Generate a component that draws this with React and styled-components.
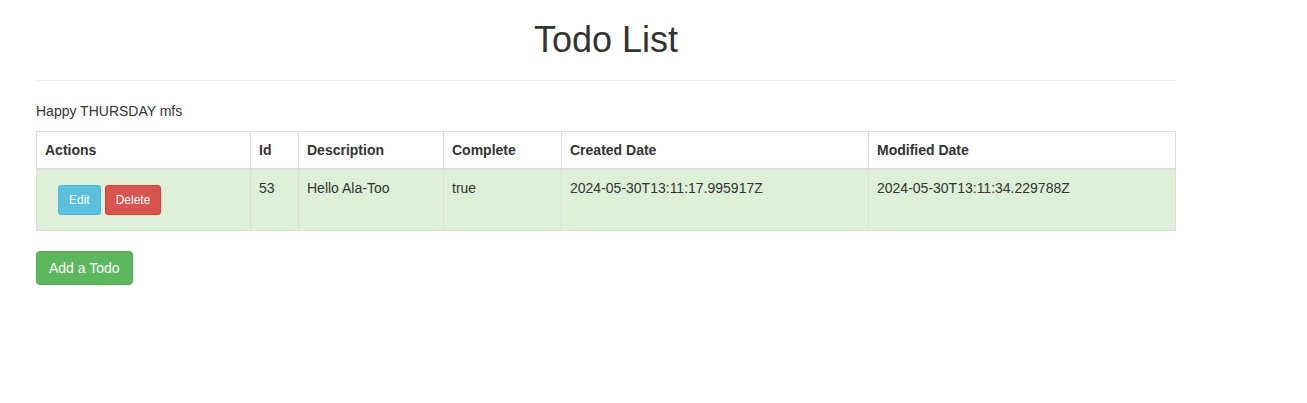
import React from "react";
import styled, { createGlobalStyle } from "styled-components";

const GlobalStyle = createGlobalStyle`
  html, body { margin: 0; padding: 0; background: #fff; }
  body {
    font-family: "Liberation Sans", Arial, Helvetica, sans-serif;
    font-size: 14px;
    line-height: 20px;
    color: #333;
  }
  * { box-sizing: border-box; }
`;

const Container = styled.div`
  width: 1140px;
  margin-left: 36px;
`;

const Title = styled.h1`
  margin: 20px 0 0;
  font-size: 36px;
  font-weight: 500;
  line-height: 40px;
  text-align: center;
  color: #333;
`;

const Rule = styled.hr`
  margin: 20px 0 20px;
  border: 0;
  border-top: 1px solid #eee;
  height: 0;
`;

const Greeting = styled.div`
  line-height: 20px;
`;

const Table = styled.table`
  margin-top: 10px;
  width: 1140px;
  border-collapse: collapse;
  border-spacing: 0;
  table-layout: fixed;
  border: 1px solid #ddd;
`;

const Th = styled.th`
  width: ${(p) => (p.$w ? `${p.$w}px` : "auto")};
  text-align: left;
  font-weight: bold;
  padding: 8px;
  line-height: 20px;
  vertical-align: bottom;
  border: 1px solid #ddd;
  border-bottom: 2px solid #ddd;
`;

const Row = styled.tr`
  background: ${(p) => (p.$success ? "#dff0d8" : "transparent")};
`;

const Td = styled.td`
  padding: 8px;
  line-height: 20px;
  vertical-align: top;
  border: 1px solid #ddd;
`;

const Actions = styled.div`
  display: flex;
  gap: 4px;
  padding: 7px 0 7px 13px;
`;

const palette = {
  info: ["#5bc0de", "#46b8da"],
  danger: ["#d9534f", "#d43f3a"],
  success: ["#5cb85c", "#4cae4c"],
};

const Button = styled.button`
  display: inline-block;
  font-family: inherit;
  color: #fff;
  background: ${(p) => palette[p.$variant][0]};
  border: 1px solid ${(p) => palette[p.$variant][1]};
  font-size: ${(p) => (p.$small ? "12px" : "14px")};
  line-height: ${(p) => (p.$small ? "18px" : "20px")};
  padding: ${(p) => (p.$small ? "5px 10px" : "6px 12px")};
  border-radius: 3px;
  cursor: pointer;
  white-space: nowrap;
`;

const AddButton = styled(Button)`
  margin-top: 20px;
  border-radius: 4px;
`;

const todos = [
  {
    id: 53,
    description: "Hello Ala-Too",
    complete: "true",
    created: "2024-05-30T13:11:17.995917Z",
    modified: "2024-05-30T13:11:34.229788Z",
  },
];

export default function App() {
  return (
    <>
      <GlobalStyle />
      <Container>
        <Title>Todo List</Title>
        <Rule />
        <Greeting>Happy THURSDAY mfs</Greeting>
        <Table>
          <thead>
            <tr>
              <Th $w={214}>Actions</Th>
              <Th $w={48}>Id</Th>
              <Th $w={145}>Description</Th>
              <Th $w={118}>Complete</Th>
              <Th $w={307}>Created Date</Th>
              <Th>Modified Date</Th>
            </tr>
          </thead>
          <tbody>
            {todos.map((t) => (
              <Row key={t.id} $success>
                <Td>
                  <Actions>
                    <Button $variant="info" $small>Edit</Button>
                    <Button $variant="danger" $small>Delete</Button>
                  </Actions>
                </Td>
                <Td>{t.id}</Td>
                <Td>{t.description}</Td>
                <Td>{t.complete}</Td>
                <Td>{t.created}</Td>
                <Td>{t.modified}</Td>
              </Row>
            ))}
          </tbody>
        </Table>
        <AddButton $variant="success">Add a Todo</AddButton>
      </Container>
    </>
  );
}
